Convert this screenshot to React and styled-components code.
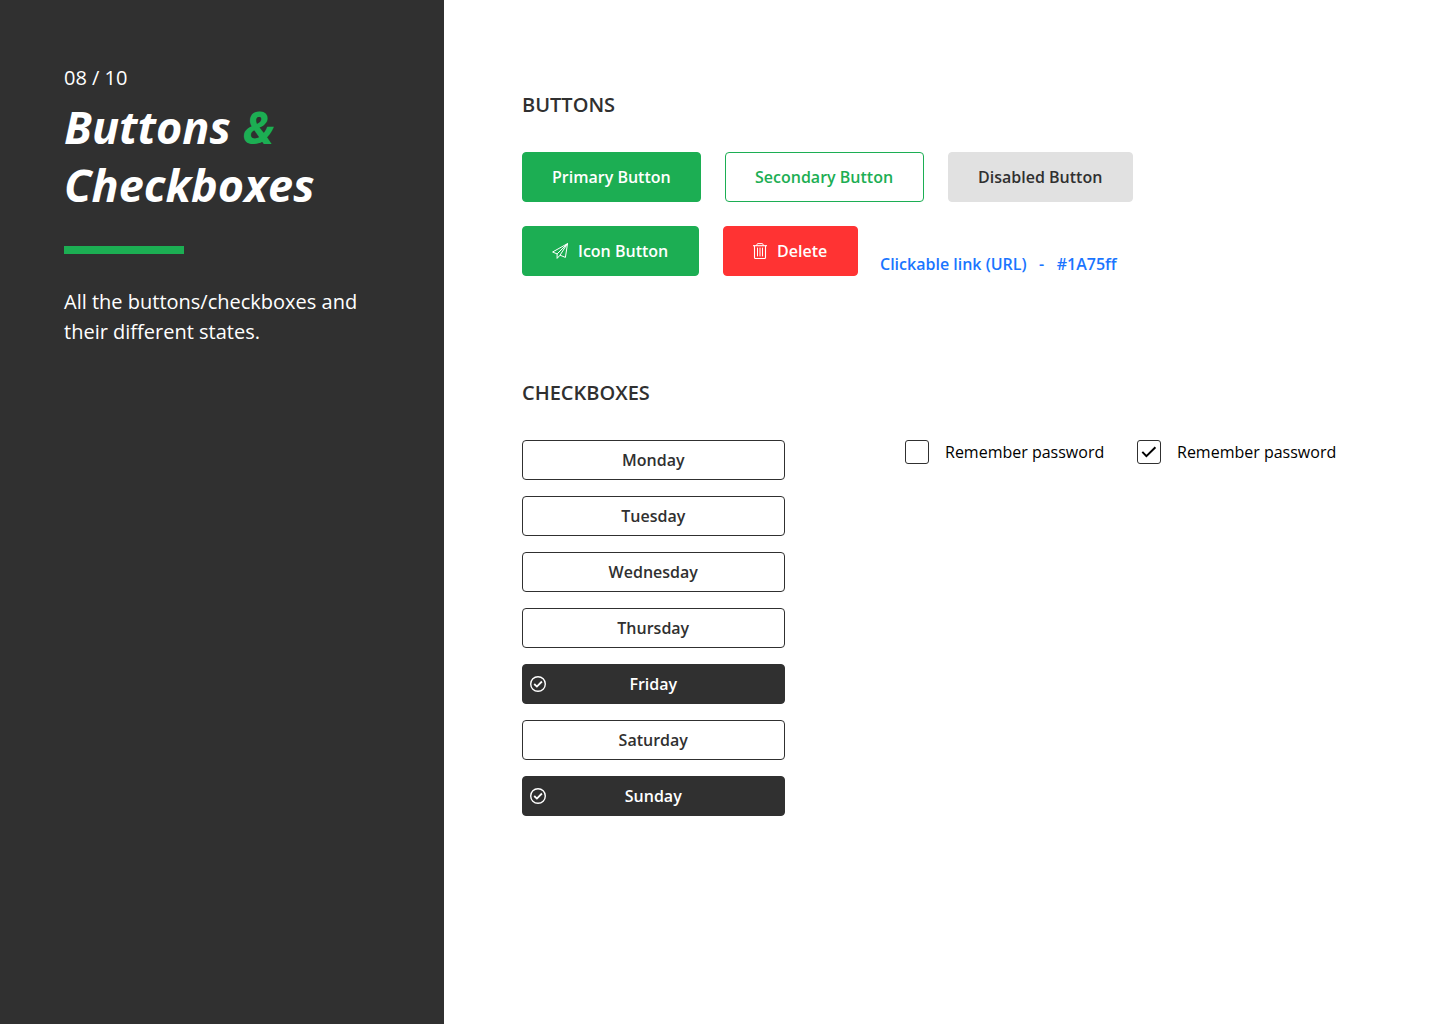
import React from 'react';
import styled, { createGlobalStyle, css } from 'styled-components';

const Global = createGlobalStyle`
  * { box-sizing: border-box; }
  body { margin: 0; background: #fff; font-family: 'Open Sans', 'Noto Sans', sans-serif; }
`;

const Page = styled.div`
  display: flex;
  width: 1440px;
  height: 1024px;
  overflow: hidden;
`;

const Sidebar = styled.aside`
  width: 444px;
  flex: none;
  padding: 63px 64px;
  background: #303030;
  color: #fff;
`;

const Counter = styled.div`
  font-size: 20px;
  line-height: 30px;
`;

const Title = styled.h1`
  margin: 5px 0 0;
  font-size: 45px;
  line-height: 58px;
  font-weight: 700;
  font-style: italic;
  white-space: nowrap;
`;

const TitleLine = styled.span`
  display: block;
`;

const Accent = styled.span`
  color: #1cae53;
`;

const Rule = styled.div`
  width: 120px;
  height: 8px;
  margin: 32px 0 33px;
  background: #1cae53;
`;

const Intro = styled.p`
  margin: 0;
  font-size: 20px;
  line-height: 30px;
  white-space: nowrap;
`;

const Content = styled.main`
  flex: 1;
  padding: 90px 0 0 78px;
`;

const Heading = styled.h2`
  margin: 0 0 32px;
  font-size: 20px;
  line-height: 30px;
  font-weight: 600;
  color: #303030;
`;

const ButtonRow = styled.div`
  display: flex;
  gap: 24px;
  margin-bottom: 24px;
`;

const tones = {
  primary: css`background: #1cae53; border-color: #1cae53; color: #fff;`,
  secondary: css`background: #fff; border-color: #1cae53; color: #1cae53;`,
  disabled: css`background: #e1e1e1; border-color: #e1e1e1; color: #303030;`,
  danger: css`background: #ff3333; border-color: #ff3333; color: #fff;`,
};

const Button = styled.button`
  display: flex;
  align-items: center;
  gap: 10px;
  width: ${(p) => p.$width}px;
  height: 50px;
  padding: 0 0 0 29px;
  border: 1px solid;
  border-radius: 4px;
  font: 600 16px/24px 'Open Sans', 'Noto Sans', sans-serif;
  white-space: nowrap;
  ${(p) => tones[p.$tone]}
`;

const Link = styled.a`
  margin: 26px 0 0 -2px;
  font-size: 16px;
  line-height: 24px;
  font-weight: 600;
  color: #1a75ff;
  white-space: pre;
`;

const CheckSection = styled.section`
  margin-top: 102px;
`;

const CheckLayout = styled.div`
  display: flex;
  align-items: flex-start;
  gap: 120px;
`;

const Days = styled.div`
  display: flex;
  flex-direction: column;
  gap: 16px;
`;

const Day = styled.div`
  display: grid;
  grid-template-columns: 16px 1fr 16px;
  align-items: center;
  width: 263px;
  height: 40px;
  padding: 0 7.5px 0 7px;
  border: 1px solid #303030;
  border-radius: 4px;
  background: ${(p) => (p.$selected ? '#303030' : '#fff')};
  color: ${(p) => (p.$selected ? '#fff' : '#303030')};
  font-size: 16px;
  line-height: 24px;
  font-weight: 600;
`;

const DayName = styled.span`
  grid-column: 2;
  text-align: center;
`;

const Options = styled.div`
  display: flex;
  gap: 32px;
`;

const Option = styled.div`
  display: flex;
  align-items: center;
  gap: 16px;
  width: 200px;
  font-size: 16px;
  line-height: 24px;
  color: #000;
  white-space: nowrap;
`;

const Box = styled.span`
  display: flex;
  flex: none;
  align-items: center;
  justify-content: center;
  width: 24px;
  height: 24px;
  border: 1px solid #303030;
  border-radius: 3px;
`;

const Icon = styled.svg`
  display: block;
  width: ${(p) => p.$width || 16}px;
  height: 16px;
  flex: none;
  fill: none;
  stroke: currentColor;
`;

const SendIcon = () => (
  <Icon viewBox="0 0 16 16" strokeWidth="1" strokeLinejoin="round">
    <path d="M15.5.6.6 9l4.5 1.9L15.5.6 8 12.2l5.4 2.2L15.5.6Z" />
    <path d="M5.1 10.9V15.4L8 12.2" />
  </Icon>
);

const TrashIcon = () => (
  <Icon $width={14} viewBox="0 0 14 16" strokeWidth="1">
    <path d="M0 2.7H14" strokeWidth="1.1" />
    <path d="M3.9 2.7V1.7Q3.9.6 5 .6H9Q10.1.6 10.1 1.7V2.7" />
    <path d="M1.5 2.7V14.5Q1.5 15.5 2.5 15.5H11.5Q12.5 15.5 12.5 14.5V2.7" strokeWidth="1.1" />
    <path d="M4.5 4.6V13.4M7 4.6V13.4M9.5 4.6V13.4" />
  </Icon>
);

const SelectedIcon = () => (
  <Icon viewBox="0 0 16 16">
    <circle cx="8" cy="8" r="7.3" strokeWidth="1.4" />
    <path d="M4.2 8 6.9 10.6 11.9 5.5" strokeWidth="1.8" />
  </Icon>
);

const TickIcon = () => (
  <Icon viewBox="0 0 16 16">
    <path d="M1.3 7.9 5.4 12.1 14.4 3.3" strokeWidth="2" />
  </Icon>
);

const days = [
  ['Monday', false],
  ['Tuesday', false],
  ['Wednesday', false],
  ['Thursday', false],
  ['Friday', true],
  ['Saturday', false],
  ['Sunday', true],
];

export default function App() {
  return (
    <>
      <Global />
      <Page>
        <Sidebar>
          <Counter>08 / 10</Counter>
          <Title>
            <TitleLine>Buttons <Accent>&amp;</Accent></TitleLine>
            <TitleLine>Checkboxes</TitleLine>
          </Title>
          <Rule />
          <Intro>All the buttons/checkboxes and<br />their different states.</Intro>
        </Sidebar>
        <Content>
          <section>
            <Heading>BUTTONS</Heading>
            <ButtonRow>
              <Button $tone="primary" $width={179}>Primary Button</Button>
              <Button $tone="secondary" $width={199}>Secondary Button</Button>
              <Button $tone="disabled" $width={185}>Disabled Button</Button>
            </ButtonRow>
            <ButtonRow>
              <Button $tone="primary" $width={177}><SendIcon />Icon Button</Button>
              <Button $tone="danger" $width={135}><TrashIcon />Delete</Button>
              <Link>{'Clickable link (URL)   -   #1A75ff'}</Link>
            </ButtonRow>
          </section>
          <CheckSection>
            <Heading>CHECKBOXES</Heading>
            <CheckLayout>
              <Days>
                {days.map(([name, selected]) => (
                  <Day key={name} $selected={selected}>
                    {selected && <SelectedIcon />}
                    <DayName>{name}</DayName>
                  </Day>
                ))}
              </Days>
              <Options>
                <Option><Box />Remember password</Option>
                <Option><Box><TickIcon /></Box>Remember password</Option>
              </Options>
            </CheckLayout>
          </CheckSection>
        </Content>
      </Page>
    </>
  );
}
